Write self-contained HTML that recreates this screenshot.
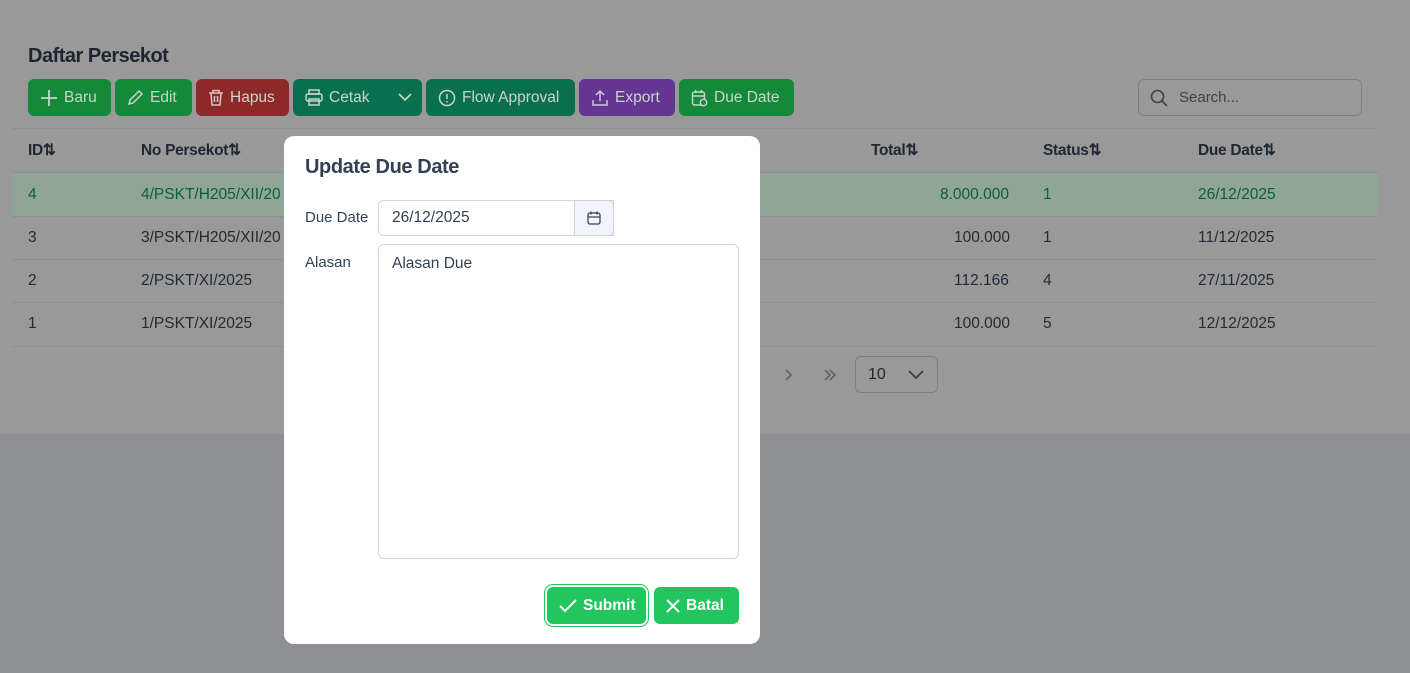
<!DOCTYPE html>
<html><head><style>
*{box-sizing:border-box;margin:0;padding:0}
body{width:1410px;height:673px;overflow:hidden;font-family:"Liberation Sans",sans-serif;background:#8f9093;position:relative}
.page{position:absolute;left:0;top:0;width:1410px;height:434px;background:#999999}
h1{position:absolute;left:28px;top:45px;font-size:20px;font-weight:bold;color:#1e2530;letter-spacing:-0.5px}
.btn{position:absolute;top:79px;height:37px;border-radius:6px;color:#c8d6cc;font-size:15.5px;display:flex;align-items:center;padding-left:12px;gap:6px}
.btn svg{flex:none}
.g{background:#14893a}.r{background:#8f2929}.t{background:#0a6f4e}.p{background:#653594}
.search{position:absolute;left:1138px;top:79px;width:224px;height:37px;border:1px solid #7b7f86;border-radius:6px;color:#3b424c;font-size:15px;padding-left:40px;line-height:35px}
.hl{position:absolute;left:12px;width:1366px;height:1px;background:#8c8f94}
.th{position:absolute;top:141px;font-size:15.5px;font-weight:bold;color:#1f2733;letter-spacing:-0.3px}
.td{position:absolute;font-size:15.5px;color:#222a35}
.row1{position:absolute;left:12px;top:173px;width:1366px;height:43px;background:#8fa596}
.modal{position:absolute;left:284px;top:136px;width:476px;height:508px;background:#fff;border-radius:10px}
.modal h2{position:absolute;left:21px;top:20px;font-size:20px;font-weight:bold;color:#334155;letter-spacing:-0.4px}
.lbl{position:absolute;left:21px;font-size:15px;color:#334155}
.inp{position:absolute;left:94px;top:64px;width:236px;height:36px;border:1px solid #cbd5e1;border-radius:6px 0 0 6px;font-size:15.5px;color:#334155;padding-left:13px;line-height:34px}
.cal{position:absolute;left:290px;top:64px;width:40px;height:36px;border:1px solid #cbd5e1;border-radius:0 6px 6px 0;background:#f1f5f9}
.ta{position:absolute;left:94px;top:108px;width:361px;height:315px;border:1px solid #cbd5e1;border-radius:6px;font-size:15.5px;color:#334155;padding:10px 13px}
.mb{position:absolute;top:451px;height:37px;background:#22c55e;border-radius:6px;color:#fff;font-weight:bold;font-size:15.5px;display:flex;align-items:center;gap:6px;padding-left:12px}
</style></head><body>
<div class="page">
<h1>Daftar Persekot</h1>
<div class="btn g" style="left:28px;width:83px"><svg width="18" height="18" viewBox="0 0 18 18" stroke="#c8d6cc" stroke-width="1.8"><path d="M9 1v16M1 9h16"/></svg>Baru</div>
<div class="btn g" style="left:115px;width:77px"><svg width="17" height="17" viewBox="0 0 17 17" fill="none" stroke="#c8d6cc" stroke-width="1.5"><path d="M2 15l1-4L12 2l3 3-9 9z"/></svg>Edit</div>
<div class="btn r" style="left:196px;width:93px"><svg width="16" height="17" viewBox="0 0 16 17" fill="none" stroke="#d8c8c8" stroke-width="1.5"><path d="M1 4h14M5 4V1.5h6V4M3 4l1 12h8l1-12M6.5 7v6M9.5 7v6"/></svg>Hapus</div>
<div class="btn t" style="left:293px;width:129px"><svg width="18" height="17" viewBox="0 0 18 17" fill="none" stroke="#c8d6cc" stroke-width="1.5"><rect x="4" y="1" width="10" height="4"/><rect x="1" y="5" width="16" height="7" rx="2"/><rect x="4" y="10" width="10" height="6"/></svg>Cetak<svg style="margin-left:22px" width="14" height="9" viewBox="0 0 14 9" fill="none" stroke="#c8d6cc" stroke-width="1.6"><path d="M1 1l6 6 6-6"/></svg></div>
<div class="btn t" style="left:426px;width:149px"><svg width="18" height="18" viewBox="0 0 18 18" fill="none" stroke="#c8d6cc" stroke-width="1.5"><circle cx="9" cy="9" r="7.5"/><path d="M9 5v5M9 12v1.5"/></svg>Flow Approval</div>
<div class="btn p" style="left:579px;width:96px"><svg width="18" height="18" viewBox="0 0 18 18" fill="none" stroke="#d0c4e0" stroke-width="1.5"><path d="M9 12V2M5 6l4-4 4 4M2 11v5h14v-5"/></svg>Export</div>
<div class="btn g" style="left:679px;width:115px"><svg width="17" height="18" viewBox="0 0 17 18" fill="none" stroke="#c8d6cc" stroke-width="1.4"><rect x="1.5" y="3" width="12" height="13" rx="2"/><path d="M1.5 7h12M4.5 1v3M10.5 1v3"/><circle cx="12.5" cy="13.5" r="3.2" fill="#14893a"/></svg>Due Date</div>
<div class="search"><svg style="position:absolute;left:11px;top:9px" width="18" height="18" viewBox="0 0 18 18" fill="none" stroke="#3b424c" stroke-width="1.6"><circle cx="7.5" cy="7.5" r="6"/><path d="M12 12l5 5"/></svg>Search...</div>
<div class="hl" style="top:128px"></div>
<div class="th" style="left:28px">ID⇅</div>
<div class="th" style="left:141px">No Persekot⇅</div>
<div class="th" style="left:871px">Total⇅</div>
<div class="th" style="left:1043px">Status⇅</div>
<div class="th" style="left:1198px">Due Date⇅</div>
<div class="hl" style="top:172px"></div>
<div class="row1"></div>
<div class="td" style="left:28px;top:186px;color:#0f5c3e">4</div><div class="td" style="left:141px;top:186px;color:#0f5c3e">4/PSKT/H205/XII/20</div><div class="td" style="left:940px;top:186px;color:#0f5c3e">8.000.000</div><div class="td" style="left:1043px;top:186px;color:#0f5c3e">1</div><div class="td" style="left:1198px;top:186px;color:#0f5c3e">26/12/2025</div>
<div class="hl" style="top:216px"></div>
<div class="td" style="left:28px;top:229px">3</div><div class="td" style="left:141px;top:229px">3/PSKT/H205/XII/20</div><div class="td" style="left:954px;top:229px">100.000</div><div class="td" style="left:1043px;top:229px">1</div><div class="td" style="left:1198px;top:229px">11/12/2025</div>
<div class="hl" style="top:259px"></div>
<div class="td" style="left:28px;top:272px">2</div><div class="td" style="left:141px;top:272px">2/PSKT/XI/2025</div><div class="td" style="left:954px;top:272px">112.166</div><div class="td" style="left:1043px;top:272px">4</div><div class="td" style="left:1198px;top:272px">27/11/2025</div>
<div class="hl" style="top:302px"></div>
<div class="td" style="left:28px;top:315px">1</div><div class="td" style="left:141px;top:315px">1/PSKT/XI/2025</div><div class="td" style="left:954px;top:315px">100.000</div><div class="td" style="left:1043px;top:315px">5</div><div class="td" style="left:1198px;top:315px">12/12/2025</div>
<div class="hl" style="top:346px"></div>
<svg style="position:absolute;left:784px;top:369px" width="8" height="12" viewBox="0 0 8 12" fill="none" stroke="#5c6370" stroke-width="1.6"><path d="M2 1l5 5-5 5"/></svg>
<svg style="position:absolute;left:823px;top:369px" width="14" height="12" viewBox="0 0 14 12" fill="none" stroke="#5c6370" stroke-width="1.6"><path d="M2 1l5 5-5 5M7 1l5 5-5 5"/></svg>
<div style="position:absolute;left:855px;top:356px;width:83px;height:37px;border:1px solid #7b7f86;border-radius:6px;font-size:16px;color:#1f2733;padding:9px 12px">10<svg style="position:absolute;left:52px;top:13px" width="16" height="10" viewBox="0 0 16 10" fill="none" stroke="#3b424c" stroke-width="1.8"><path d="M1 1l7 7 7-7"/></svg></div>
</div>
<div class="modal">
<h2>Update Due Date</h2>
<div class="lbl" style="top:73px">Due Date</div>
<div class="inp">26/12/2025</div>
<div class="cal"><svg style="position:absolute;left:11px;top:9px" width="16" height="16" viewBox="0 0 16 16" fill="none" stroke="#334155" stroke-width="1.3"><rect x="2" y="3" width="12" height="11" rx="2"/><path d="M2 7h12M5 1.5v3M11 1.5v3"/></svg></div>
<div class="lbl" style="top:118px">Alasan</div>
<div class="ta">Alasan Due</div>
<div class="mb" style="left:263px;width:99px;box-shadow:0 0 0 2px #fff,0 0 0 3px #22c55e"><svg width="18" height="14" viewBox="0 0 18 14" fill="none" stroke="#fff" stroke-width="2"><path d="M1 7l5 5L17 1"/></svg>Submit</div>
<div class="mb" style="left:370px;width:85px"><svg width="14" height="14" viewBox="0 0 14 14" stroke="#fff" stroke-width="2"><path d="M1 1l12 12M13 1L1 13"/></svg>Batal</div>
</div>
</body></html>
